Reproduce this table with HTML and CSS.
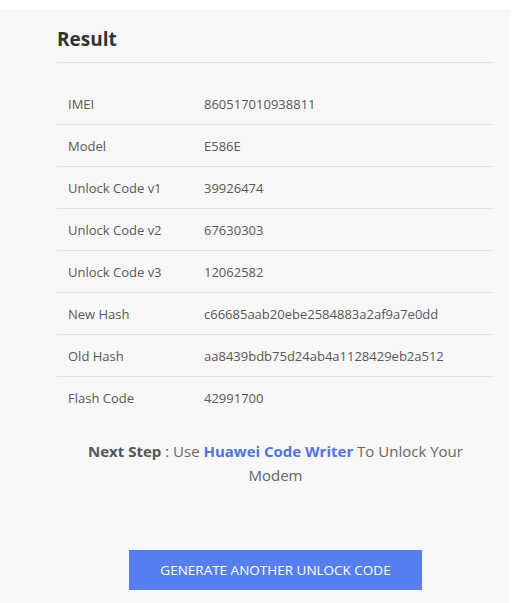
FILE: index.html
```html
<!DOCTYPE html>
<html>
<head>
<meta charset="utf-8">
<link rel="stylesheet" href="styles.css">
</head>
<body>
<div class="panel">
  <h2 class="title">Result</h2>
  <table class="result">
    <tr><td class="label">IMEI</td><td>860517010938811</td></tr>
    <tr><td class="label">Model</td><td>E586E</td></tr>
    <tr><td class="label">Unlock Code v1</td><td>39926474</td></tr>
    <tr><td class="label">Unlock Code v2</td><td>67630303</td></tr>
    <tr><td class="label">Unlock Code v3</td><td>12062582</td></tr>
    <tr><td class="label">New Hash</td><td>c66685aab20ebe2584883a2af9a7e0dd</td></tr>
    <tr><td class="label">Old Hash</td><td>aa8439bdb75d24ab4a1128429eb2a512</td></tr>
    <tr><td class="label">Flash Code</td><td>42991700</td></tr>
  </table>
  <p class="next"><strong>Next Step</strong> : Use <a class="link" href="#">Huawei Code Writer</a> To Unlock Your Modem</p>
  <div class="actions">
    <button class="btn">GENERATE ANOTHER UNLOCK CODE</button>
  </div>
</div>
</body>
</html>
```

FILE: styles.css
```css
html, body {
  margin: 0;
  padding: 0;
  background: #ffffff;
}
body {
  font-family: "Open Sans", "Noto Sans", sans-serif;
  color: #555;
}
.panel {
  margin-top: 9px;
  width: 437px;
  padding: 0 16px 40px 57px;
  background: #f7f7f7;
  min-height: 560px;
}
.title {
  margin: 0;
  padding: 17px 0 10px;
  font-size: 19px;
  line-height: 26px;
  font-weight: 700;
  color: #333;
  border-bottom: 1px solid #e2e2e2;
}
.result {
  margin-top: 20px;
  width: 100%;
  border-collapse: collapse;
  font-size: 13px;
  color: #585858;
}
.result td {
  height: 41px;
  padding: 0;
  vertical-align: middle;
  border-bottom: 1px solid #e4e4e4;
}
.result tr:last-child td {
  border-bottom: none;
}
.result td.label {
  width: 136px;
  padding-left: 11px;
}
.next {
  margin: 21px 0 0;
  padding: 0 22px;
  text-align: center;
  font-size: 15px;
  line-height: 24px;
  color: #666;
}
.next strong {
  color: #555;
}
.link {
  color: #5074e0;
  font-weight: 700;
  text-decoration: none;
}
.actions {
  display: flex;
  justify-content: center;
  margin-top: 63px;
}
.btn {
  width: 293px;
  height: 40px;
  border: none;
  background: #577ef0;
  color: #fff;
  font-family: "Open Sans", "Noto Sans", sans-serif;
  font-size: 13.5px;
  padding: 0;
}
```
